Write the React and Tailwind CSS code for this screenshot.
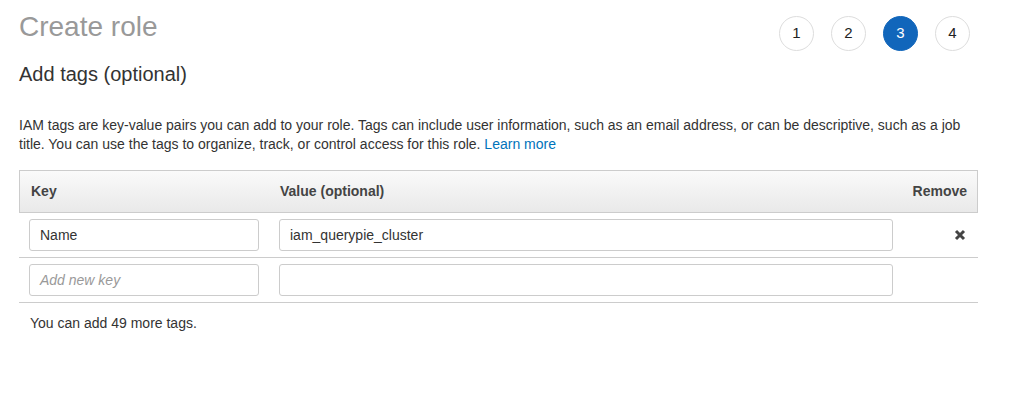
import React from "react";

function Step({ n, active }) {
  return (
    <div
      className={
        "w-[35px] h-[35px] rounded-full flex items-center justify-center text-[15px] " +
        (active
          ? "bg-[#1166bb] text-white border border-[#1166bb]"
          : "bg-white text-[#222] border border-[#dddddd]")
      }
    >
      {n}
    </div>
  );
}

function XIcon() {
  return (
    <svg width="12" height="12" viewBox="0 0 12 12">
      <path
        d="M2 2 L10 10 M10 2 L2 10"
        stroke="#444"
        strokeWidth="3"
        strokeLinecap="butt"
      />
    </svg>
  );
}

export default function App() {
  return (
    <div
      className="w-[1009px] h-[413px] bg-white pl-[19px] pr-[31px] text-[#333] text-[14px]"
      style={{ fontFamily: '"Liberation Sans", Arial, sans-serif' }}
    >
      <div className="flex items-start justify-between">
        <h1 className="text-[28px] leading-[32px] text-[#999999] pt-[11px] font-normal">
          Create role
        </h1>
        <div className="flex gap-[17px] mt-[16px] mr-[8px]">
          <Step n={1} />
          <Step n={2} />
          <Step n={3} active />
          <Step n={4} />
        </div>
      </div>
      <h2 className="text-[20px] leading-[24px] text-[#333] mt-[11px] font-normal">
        Add tags (optional)
      </h2>
      <p className="mt-[30px] leading-[19px] text-[14px] text-[#333]">
        IAM tags are key-value pairs you can add to your role. Tags can include user information, such as an email address, or can be descriptive, such as a job title. You can use the tags to organize, track, or control access for this role.{" "}
        <a className="text-[#0073bb]">Learn more</a>
      </p>
      <div className="mt-[16px]">
        <div className="flex h-[43px] items-center border border-[#cccccc] bg-gradient-to-b from-[#fafafa] to-[#e9e9e9] font-bold text-[#444]">
          <div className="w-[250px] pl-[11px]">Key</div>
          <div className="flex-1 pl-[10px]">Value (optional)</div>
          <div className="w-[80px] pr-[10px] text-right">Remove</div>
        </div>
        <div className="flex items-center h-[45px] border-b border-[#cccccc]">
          <div className="w-[250px] pl-[10px]">
            <div className="h-[32px] w-[230px] border border-[#cccccc] rounded-[3px] flex items-center px-[10px] text-[#333]">
              Name
            </div>
          </div>
          <div className="flex-1 pl-[10px] pr-[0px]">
            <div className="h-[32px] w-[614px] border border-[#cccccc] rounded-[3px] flex items-center px-[10px] text-[#333]">
              iam_querypie_cluster
            </div>
          </div>
          <div className="w-[80px] flex justify-end pr-[12px]">
            <XIcon />
          </div>
        </div>
        <div className="flex items-center h-[45px] border-b border-[#cccccc]">
          <div className="w-[250px] pl-[10px]">
            <div className="h-[32px] w-[230px] border border-[#cccccc] rounded-[3px] flex items-center px-[10px] text-[#999] italic">
              Add new key
            </div>
          </div>
          <div className="flex-1 pl-[10px]">
            <div className="h-[32px] w-[614px] border border-[#cccccc] rounded-[3px]"></div>
          </div>
          <div className="w-[80px]"></div>
        </div>
      </div>
      <p className="mt-[10px] pl-[11px] text-[#333]">You can add 49 more tags.</p>
    </div>
  );
}
